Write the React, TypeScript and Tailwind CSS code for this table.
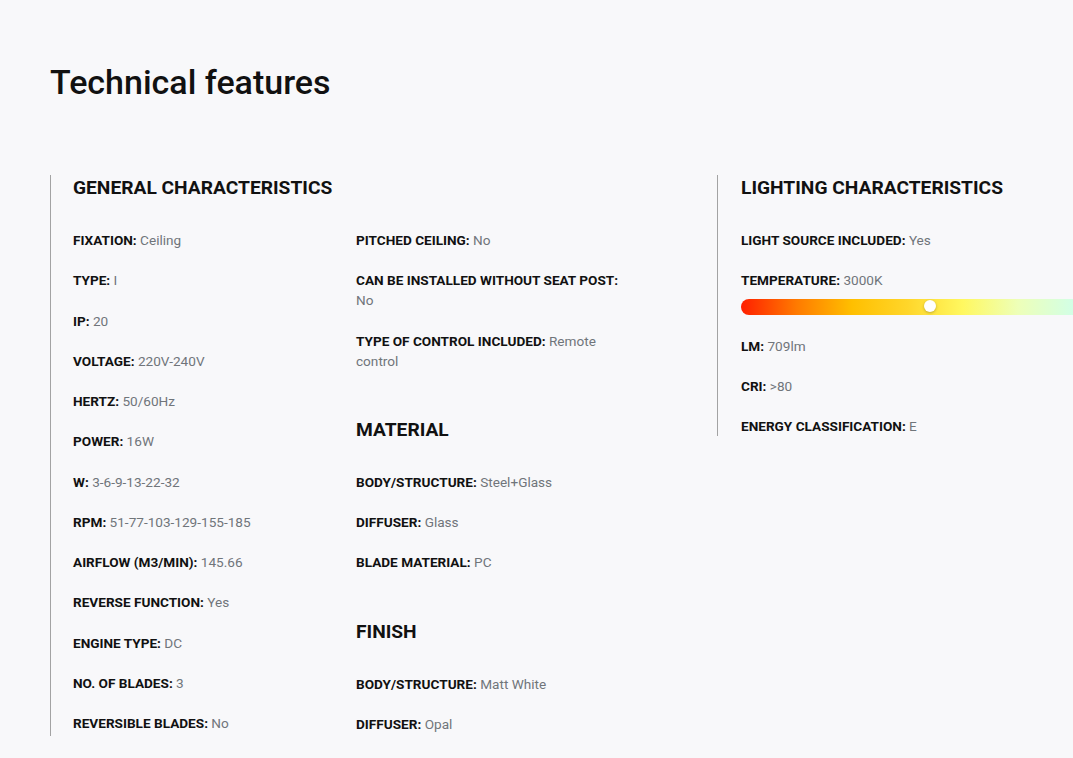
import React from 'react';

type Spec = { label: string; value: string };

const general: Spec[] = [
  { label: 'FIXATION', value: 'Ceiling' },
  { label: 'TYPE', value: 'I' },
  { label: 'IP', value: '20' },
  { label: 'VOLTAGE', value: '220V-240V' },
  { label: 'HERTZ', value: '50/60Hz' },
  { label: 'POWER', value: '16W' },
  { label: 'W', value: '3-6-9-13-22-32' },
  { label: 'RPM', value: '51-77-103-129-155-185' },
  { label: 'AIRFLOW (M3/MIN)', value: '145.66' },
  { label: 'REVERSE FUNCTION', value: 'Yes' },
  { label: 'ENGINE TYPE', value: 'DC' },
  { label: 'NO. OF BLADES', value: '3' },
  { label: 'REVERSIBLE BLADES', value: 'No' },
];

const generalMore: Spec[] = [
  { label: 'PITCHED CEILING', value: 'No' },
  { label: 'CAN BE INSTALLED WITHOUT SEAT POST', value: 'No' },
  { label: 'TYPE OF CONTROL INCLUDED', value: 'Remote control' },
];

const material: Spec[] = [
  { label: 'BODY/STRUCTURE', value: 'Steel+Glass' },
  { label: 'DIFFUSER', value: 'Glass' },
  { label: 'BLADE MATERIAL', value: 'PC' },
];

const finish: Spec[] = [
  { label: 'BODY/STRUCTURE', value: 'Matt White' },
  { label: 'DIFFUSER', value: 'Opal' },
];

const Item: React.FC<{ spec: Spec; children?: React.ReactNode }> = ({ spec, children }) => (
  <div className="text-[13.6px] leading-[20px]">
    <span className="font-bold text-[#111]">{spec.label}:</span>{' '}
    <span className="text-[#70757a]">{spec.value}</span>
    {children}
  </div>
);

const List: React.FC<{ items: Spec[] }> = ({ items }) => (
  <div className="flex flex-col gap-[20.25px]">
    {items.map((s) => (
      <Item key={s.label} spec={s} />
    ))}
  </div>
);

const Title: React.FC<{ children: React.ReactNode }> = ({ children }) => (
  <h3 className="text-[19.2px] leading-[26px] font-bold text-[#111] mb-[29px]">{children}</h3>
);

const TemperatureBar = () => (
  <div className="relative mt-[9px] h-4 w-full rounded-full bg-[linear-gradient(90deg,#ff1f00_0%,#ff7a00_14%,#ffbf00_28%,#ffd62a_42%,#fff860_56%,#edffb8_70%,#d2ffe6_84%,#c6ecff_100%)]">
    <div className="absolute left-[183px] top-[1px] h-3 w-3 rounded-full bg-white shadow-[0_1px_3px_rgba(0,0,0,0.25)]" />
  </div>
);

export default function App() {
  return (
    <div className="min-h-screen overflow-hidden bg-[#f8f8fa] font-['Roboto',sans-serif]">
      <div className="pl-[50px] pt-[62px]">
        <h1 className="text-[34px] leading-[41px] font-medium text-[#111]">Technical features</h1>

        <div className="mt-[72px] flex items-start">
          {/* General characteristics */}
          <div className="w-[667px] shrink-0 border-l border-[#a3a3a3] pl-[22px] pb-[2px]">
            <Title>GENERAL CHARACTERISTICS</Title>
            <div className="flex">
              <div className="w-[283px] shrink-0">
                <List items={general} />
              </div>
              <div className="w-[275px] shrink-0">
                <List items={generalMore} />
                <div className="mt-[46px]">
                  <Title>MATERIAL</Title>
                  <List items={material} />
                </div>
                <div className="mt-[47px]">
                  <Title>FINISH</Title>
                  <List items={finish} />
                </div>
              </div>
            </div>
          </div>

          {/* Lighting characteristics */}
          <div className="w-[420px] shrink-0 border-l border-[#a3a3a3] pl-[23px]">
            <Title>LIGHTING CHARACTERISTICS</Title>
            <div className="flex flex-col gap-[20.25px]">
              <Item spec={{ label: 'LIGHT SOURCE INCLUDED', value: 'Yes' }} />
              <Item spec={{ label: 'TEMPERATURE', value: '3000K' }}>
                <TemperatureBar />
              </Item>
              <Item spec={{ label: 'LM', value: '709lm' }} />
              <Item spec={{ label: 'CRI', value: '>80' }} />
              <Item spec={{ label: 'ENERGY CLASSIFICATION', value: 'E' }} />
            </div>
          </div>
        </div>
      </div>
    </div>
  );
}
